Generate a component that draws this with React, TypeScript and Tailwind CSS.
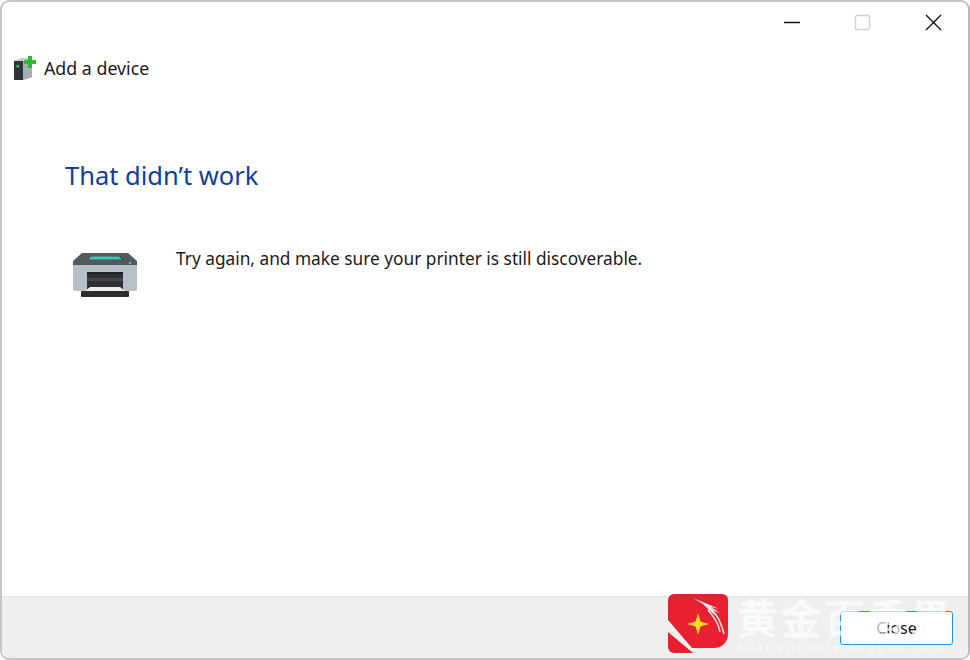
export default function App() {
  return (
    <div className="relative w-[970px] h-[660px] overflow-hidden bg-white font-['Noto_Sans',sans-serif]">
      <div className="flex flex-col w-full h-[660px] rounded-[9px] border-2 border-[#c4c6c8] border-r-[#b9bbbd] overflow-hidden bg-white">
        <div className="flex justify-end h-[38px] pr-[3px] text-[#1a1a1a]">
          <div className="flex items-center mt-[-2px]">
            <svg width="70" height="38" viewBox="0 0 70 38"><path d="M11 21.5h16" stroke="#111" strokeWidth="1.3" /></svg>
            <svg width="70" height="38" viewBox="0 0 70 38"><rect x="12.5" y="14.5" width="14" height="14" rx="2" fill="none" stroke="#d2d2d2" strokeWidth="1.4" /></svg>
            <svg width="52" height="38" viewBox="0 0 52 38"><path d="M13 14l15 15M28 14L13 29" stroke="#111" strokeWidth="1.4" /></svg>
          </div>
        </div>
        <div className="flex items-center h-[58px] pl-[11px] gap-[7px]">
          <svg width="24" height="26" viewBox="0 0 24 26">
            <path d="M1 5l8-3h10v19l-9 3H2a1 1 0 0 1-1-1z" fill="#8f9599" />
            <path d="M1 5l8-3h10l-8 3z" fill="#c9cdd0" />
            <path d="M1 5h9v19H2a1 1 0 0 1-1-1z" fill="#30333a" />
            <path d="M10 5h9v15l-9 4z" fill="#a9aeb2" />
            <rect x="3.5" y="9" width="2.5" height="2.5" fill="#27d04a" />
            <path d="M11 4h4V0h4v4h4v4h-4v4h-4V8h-4z" fill="#2cb92f" />
          </svg>
          <span className="text-[17.8px] leading-none text-[#1a1a1a]">Add a device</span>
        </div>
        <div className="flex-1 flex flex-col pl-[63px]">
          <h1 className="mt-[57px] text-[25.5px] leading-[40px] font-normal text-[#0f3e9e]">That didn’t work</h1>
          <div className="flex items-start mt-[51px]">
            <svg width="66" height="46" viewBox="0 0 66 46" className="mt-[6px] ml-[7px]">
              <path d="M10 1h46l9 8v5H1V9z" fill="#55595e" />
              <path d="M18 4h30l4 4H14z" fill="#44474c" />
              <path d="M19 4.5h28l3 3H16z" fill="#38c9b4" />
              <path d="M1 13h64v24a2 2 0 0 1-2 2H3a2 2 0 0 1-2-2z" fill="#b7bfc7" />
              <rect x="15" y="20" width="36" height="19" fill="#2e3033" />
              <rect x="15" y="26" width="36" height="3" fill="#45484b" />
              <rect x="15" y="20" width="36" height="2" fill="#1f2123" />
              <path d="M18 35h30l5 4H13z" fill="#ecece9" />
              <rect x="9" y="39" width="48" height="6" rx="1" fill="#2a2c2e" />
              <circle cx="58" cy="11" r="1.3" fill="#2ee04a" />
            </svg>
            <p className="ml-[38px] mt-[1px] text-[17.3px] leading-[24px] text-[#1a1a1a]">Try again, and make sure your printer is still discoverable.</p>
          </div>
        </div>
        <div className="flex justify-end items-center h-[62px] bg-[#efefef] border-t border-[#e4e4e4] pr-[15px]">
          <button className="w-[113px] h-[34px] rounded-[3px] border border-[#2f8fdc] bg-white text-[16px] text-[#111]">Close</button>
        </div>
      </div>

      <div className="absolute left-[668px] top-[594px] w-[60px] h-[60px]">
        <svg width="60" height="60" viewBox="0 0 60 60">
          <path d="M6 0h48a6 6 0 0 1 6 6v34c0 8-6 14-14 14H24L0 26V6a6 6 0 0 1 6-6z" fill="#e8202f" />
          <path d="M0 38l25 21H6a6 6 0 0 1-6-6z" fill="#e8202f" />
          <path d="M30 19l2.5 8.5L41 30l-8.5 2.5L30 41l-2.5-8.5L19 30l8.5-2.5z" fill="#ffd92a" />
          <path d="M25 4l12 5 14 6-8-2 9 6-8-3 8 9-10-8-7-7z" fill="#fbe9ea" />
          <path d="M43 15c7 7 11 16 13 25M40 16c7 8 11 15 12 22" stroke="#fbe9ea" strokeWidth="1.5" fill="none" />
        </svg>
      </div>
      <div className="absolute left-[736px] top-[593px] w-[224px] h-[62px] flex flex-col items-start pl-[1px] text-white/70">
        <span className="text-[41px] leading-[46px] font-bold whitespace-nowrap tracking-[2.4px] font-['Noto_Sans_CJK_SC',sans-serif]">黄金百香果</span>
        <span className="text-[10.5px] leading-[14px] tracking-[3.4px] whitespace-nowrap mt-[1px]">huangjinbaixiangguo.com</span>
      </div>
    </div>
  );
}
